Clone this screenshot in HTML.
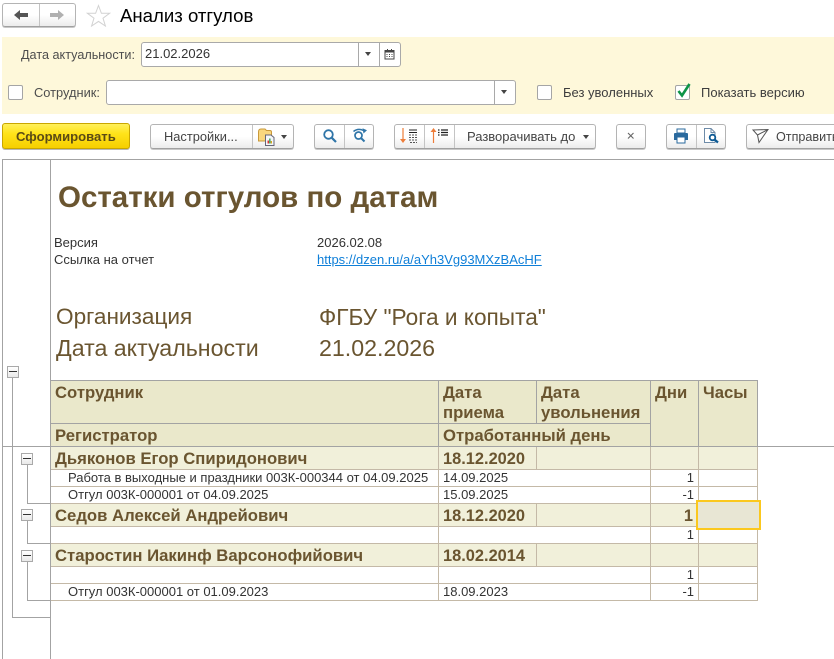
<!DOCTYPE html>
<html lang="ru"><head><meta charset="utf-8"><title>Анализ отгулов</title>
<style>
html,body{margin:0;padding:0;background:#fff}
#p{position:relative;width:834px;height:659px;overflow:hidden;background:#fff;font-family:"Liberation Sans",sans-serif;font-size:13px;color:#333}
#p div,#p svg{position:absolute}
.t{white-space:nowrap;line-height:14px}
.btn{box-sizing:border-box;top:124px;height:25px;border:1px solid #b4b4b4;border-bottom:1px solid #a0a0a0;border-radius:3px;background:linear-gradient(#fff,#fff 50%,#ececec);box-shadow:0 1px 0 #c8c8c8}
.sep{top:125px;width:1px;height:23px;background:#c4c4c4}
.inp{box-sizing:border-box;height:25px;border:1px solid #a9a9a9;border-radius:3px;background:#fff}
.cb{box-sizing:border-box;width:15px;height:15px;border:1px solid #a5a5a5;border-radius:2px;background:#fff}
.g{background:#a3a3a3}
.r{background:#c4b9a7}
.d{white-space:nowrap;font-size:13px;line-height:14px;color:#333}
.b{white-space:nowrap;font-weight:bold;font-size:16.400px;line-height:18px;color:#6a5530}
.n{font-size:16.700px}
.h{white-space:nowrap;font-weight:bold;font-size:16.700px;line-height:20px;color:#6a5530}
.x{box-sizing:border-box;width:12px;height:12px;border:1px solid #a9a9a9;background:linear-gradient(#fff,#e9e9e9)}
.x:after{content:"";position:absolute;left:1px;top:4px;width:8px;height:1px;background:#333}
.tri{width:0;height:0;border-left:3.5px solid transparent;border-right:3.5px solid transparent;border-top:4px solid #444}
</style></head><body><div id="p">

<!-- top nav -->
<div class="btn" style="left:2px;top:3px;width:74px;height:24px"></div>
<div class="sep" style="left:39px;top:4px;height:22px"></div>
<svg style="left:13px;top:8px" width="16" height="14"><path d="M1 7L7 2V5H15V9H7V12Z" fill="#555"/></svg>
<svg style="left:49px;top:8px" width="16" height="14"><path d="M15 7L9 2V5H1V9H9V12Z" fill="#b0b0b0"/></svg>
<svg style="left:86px;top:4px" width="25" height="23"><path d="M12.5 1.5L15.4 9.3H23.6L17 14.2L19.4 22L12.5 17.4L5.6 22L8 14.2L1.4 9.3H9.600Z" fill="#fff" stroke="#d2d2d2"/></svg>
<div class="t" style="left:120px;top:5px;font-size:18.600px;line-height:22px;color:#000">Анализ отгулов</div>

<!-- filter panel -->
<div style="left:2px;top:37px;width:832px;height:77px;background:#fef8da"></div>
<div class="t" style="left:21px;top:48px;font-size:12.650px;color:#4d4d4d">Дата актуальности:</div>
<div class="inp" style="left:141px;top:42px;width:260px"></div>
<div class="t" style="left:145px;top:47px;color:#333">21.02.2026</div>
<div style="left:358px;top:43px;width:1px;height:23px;background:#a9a9a9"></div>
<div style="left:379px;top:43px;width:1px;height:23px;background:#a9a9a9"></div>
<div class="tri" style="left:365px;top:52px"></div>
<svg style="left:384px;top:48px" width="11" height="12"><path d="M1 2.500H10V11H1Z" fill="#fff" stroke="#444"/><path d="M1 2H10V4.500H1ZM3 1h1v2H3ZM7 1h1v2H7Z" fill="#444"/><path d="M2.500 6h1v1h-1zM5 6h1v1H5zM7.500 6h1v1h-1zM2.500 8h1v1h-1zM5 8h1v1H5zM7.500 8h1v1h-1z" fill="#444"/></svg>

<div class="cb" style="left:8px;top:85px"></div>
<div class="t" style="left:34px;top:86px;font-size:12.850px;color:#4d4d4d">Сотрудник:</div>
<div class="inp" style="left:106px;top:80px;width:410px"></div>
<div style="left:494px;top:81px;width:1px;height:23px;background:#a9a9a9"></div>
<div class="tri" style="left:501px;top:90px"></div>
<div class="cb" style="left:537px;top:85px"></div>
<div class="t" style="left:563px;top:86px;color:#3d3d3d">Без уволенных</div>
<div class="cb" style="left:675px;top:85px"></div>
<svg style="left:675px;top:82px" width="17" height="17"><path d="M3.500 9L7 13.500L14.500 2" fill="none" stroke="#0d9447" stroke-width="2.600"/></svg>
<div class="t" style="left:701px;top:86px;color:#3d3d3d">Показать версию</div>

<!-- toolbar -->
<div style="box-sizing:border-box;left:2px;top:123px;width:128px;height:26px;border:1px solid #c9a600;border-radius:3px;background:linear-gradient(#fff05a,#ffe31a 40%,#f6cf00);box-shadow:0 1px 0 #b8b8b8"></div>
<div class="t" style="left:16px;top:130px;font-weight:bold;font-size:13.100px;color:#5b4b15">Сформировать</div>

<div class="btn" style="left:150px;width:144px"></div>
<div class="sep" style="left:252px"></div>
<div class="t" style="left:164px;top:130px;font-size:12.850px;color:#444">Настройки...</div>
<svg style="left:257px;top:127px" width="19" height="20">
<path d="M1.500 5Q1.500 2 4 2H8L9.500 3.500H13Q14.500 3.500 14.500 5V14H1.500Z" fill="#f9d77e" stroke="#c9993a"/>
<path d="M8.500 8H14L17 10.500V18.500H8.500Z" fill="#f4f7fa" stroke="#667"/>
<path d="M10.500 16.500V13.500H12V16.500Z" fill="#d33"/><path d="M12.200 16.500V11.500H13.500V16.500Z" fill="#2a9a4a"/><path d="M13.700 16.500V14H15V16.500Z" fill="#d9a520"/>
</svg>
<div class="tri" style="left:281px;top:135px"></div>

<div class="btn" style="left:314px;width:60px"></div>
<div class="sep" style="left:344px"></div>
<svg style="left:322px;top:128px" width="16" height="16"><circle cx="6.500" cy="6.500" r="4.300" fill="none" stroke="#2f75a8" stroke-width="1.800"/><path d="M9.800 9.800L14 14" stroke="#2f75a8" stroke-width="2.200"/></svg>
<svg style="left:352px;top:127px" width="17" height="17"><circle cx="6.500" cy="8.500" r="3.500" fill="none" stroke="#2f75a8" stroke-width="1.700"/><path d="M9 11L12.500 14.500" stroke="#2f75a8" stroke-width="2"/><path d="M1.500 4.500Q6 .8 11.500 3.500" fill="none" stroke="#2f75a8" stroke-width="1.500"/><path d="M10.500 1.200L15 3.200L11.500 6.500Z" fill="#2f75a8"/></svg>

<div class="btn" style="left:394px;width:202px"></div>
<div class="sep" style="left:424px"></div>
<div class="sep" style="left:454px"></div>
<svg style="left:399px;top:127px" width="20" height="19"><path d="M4 1V13" stroke="#ed7d3a" stroke-width="1.200"/><path d="M1 12H7L4 16Z" fill="#ed7d3a"/><path d="M10 3h8M10 5.500h8" stroke="#222" stroke-width="1.100"/><path d="M10 8h8M10 10.500h8M10 13h8M11 15.500h7" stroke="#555" stroke-width="1" stroke-dasharray="2 1"/></svg>
<svg style="left:429px;top:127px" width="22" height="18"><path d="M4.500 4V16" stroke="#ed7d3a" stroke-width="1.200"/><path d="M1.500 5H7.500L4.500 1Z" fill="#ed7d3a"/><path d="M9 3h1.500M9 5.500h1.500M9 8h1.500" stroke="#222" stroke-width="1.200"/><path d="M12 3h7M12 5.500h7M12 8h7" stroke="#222" stroke-width="1.200"/></svg>
<div class="t" style="left:467px;top:130px;color:#444">Разворачивать до</div>
<div class="tri" style="left:583px;top:135px"></div>

<div class="btn" style="left:616px;width:30px"></div>
<svg style="left:626px;top:131px" width="10" height="10"><path d="M2 2L7.500 7.500M7.500 2L2 7.500" stroke="#666" stroke-width="1.100"/></svg>

<div class="btn" style="left:666px;width:60px"></div>
<div class="sep" style="left:696px"></div>
<svg style="left:673px;top:128px" width="16" height="16"><path d="M4 1H12V5H4Z" fill="#fff" stroke="#2a6a9e"/><path d="M1 6Q1 5 2 5H14Q15 5 15 6V12H1Z" fill="#2a6a9e"/><path d="M4 9H12V15H4Z" fill="#fff" stroke="#2a6a9e"/></svg>
<svg style="left:703px;top:127px" width="18" height="18"><path d="M1.500 1.500H8L12 5.500V15.500H1.500Z" fill="#fff" stroke="#6e8ba8"/><path d="M8 1.500V5.500H12" fill="none" stroke="#6e8ba8"/><circle cx="9.500" cy="10.500" r="2.800" fill="#fff" stroke="#0d5a94" stroke-width="1.800"/><path d="M11.500 12.500L15 15.500" stroke="#0d5a94" stroke-width="2.200"/></svg>

<div class="btn" style="left:746px;width:100px"></div>
<svg style="left:752px;top:128px" width="18" height="16"><path d="M1 2L16 1.500L7 14.500L5.500 7Z" fill="none" stroke="#555" stroke-width="1"/><path d="M5.500 7L16 1.500" stroke="#555" stroke-width="1"/></svg>
<div class="t" style="left:776px;top:130px;font-size:12.600px;color:#444">Отправить</div>

<!-- sheet frame -->
<div class="g" style="left:2px;top:159px;width:832px;height:1px"></div>
<div class="g" style="left:2px;top:159px;width:1px;height:500px"></div>
<div class="g" style="left:50px;top:159px;width:1px;height:500px"></div>

<!-- report head -->
<div class="t" style="left:58px;top:181px;font-weight:bold;font-size:29.500px;line-height:34px;color:#6a5530">Остатки отгулов по датам</div>
<div class="t" style="left:54px;top:236px;color:#333">Версия</div>
<div class="t" style="left:54px;top:253px;color:#333">Ссылка на отчет</div>
<div class="t" style="left:317px;top:236px;color:#333">2026.02.08</div>
<div class="t" style="left:317px;top:253px;color:#0f7fd8;text-decoration:underline">https://dzen.ru/a/aYh3Vg93MXzBAcHF</div>
<div class="t" style="left:56px;top:303px;font-size:22.600px;line-height:28px;color:#6a5530">Организация</div>
<div class="t" style="left:56px;top:334px;font-size:23.200px;line-height:28px;color:#6a5530">Дата актуальности</div>
<div class="t" style="left:319px;top:303px;font-size:22.650px;line-height:28px;color:#6a5530">ФГБУ "Рога и копыта"</div>
<div class="t" style="left:319px;top:334px;font-size:23.200px;line-height:28px;color:#6a5530">21.02.2026</div>

<!-- table fills -->
<div style="left:51px;top:381px;width:706px;height:65px;background:#eae8cb"></div>
<div style="left:51px;top:447px;width:706px;height:22px;background:#f1f0da"></div>
<div style="left:51px;top:504px;width:706px;height:22px;background:#f1f0da"></div>
<div style="left:51px;top:544px;width:706px;height:22px;background:#f1f0da"></div>

<!-- body grid -->
<div class="r" style="left:51px;top:469px;width:707px;height:1px"></div>
<div class="r" style="left:51px;top:486px;width:707px;height:1px"></div>
<div class="r" style="left:51px;top:503px;width:707px;height:1px"></div>
<div class="r" style="left:51px;top:526px;width:707px;height:1px"></div>
<div class="r" style="left:51px;top:543px;width:707px;height:1px"></div>
<div class="r" style="left:51px;top:566px;width:707px;height:1px"></div>
<div class="r" style="left:51px;top:583px;width:707px;height:1px"></div>
<div class="r" style="left:51px;top:600px;width:707px;height:1px"></div>
<div class="r" style="left:438px;top:447px;width:1px;height:153px"></div>
<div class="r" style="left:650px;top:447px;width:1px;height:153px"></div>
<div class="r" style="left:698px;top:447px;width:1px;height:153px"></div>
<div class="r" style="left:757px;top:447px;width:1px;height:154px"></div>
<div class="r" style="left:536px;top:447px;width:1px;height:22px"></div>
<div class="r" style="left:536px;top:504px;width:1px;height:22px"></div>
<div class="r" style="left:536px;top:544px;width:1px;height:22px"></div>

<!-- header grid -->
<div class="g" style="left:51px;top:380px;width:707px;height:1px"></div>
<div class="g" style="left:51px;top:423px;width:600px;height:1px"></div>
<div class="g" style="left:438px;top:380px;width:1px;height:66px"></div>
<div class="g" style="left:536px;top:380px;width:1px;height:43px"></div>
<div class="g" style="left:650px;top:380px;width:1px;height:66px"></div>
<div class="g" style="left:698px;top:380px;width:1px;height:66px"></div>
<div class="g" style="left:757px;top:380px;width:1px;height:66px"></div>
<div class="g" style="left:2px;top:446px;width:832px;height:1px"></div>

<div class="h" style="left:55px;top:383px">Сотрудник</div>
<div class="h" style="left:55px;top:426px">Регистратор</div>
<div class="h" style="left:443px;top:383px">Дата</div>
<div class="h" style="left:443px;top:403px">приема</div>
<div class="h" style="left:541px;top:383px">Дата</div>
<div class="h" style="left:541px;top:403px">увольнения</div>
<div class="h" style="left:443px;top:426px">Отработанный день</div>
<div class="h" style="left:655px;top:383px">Дни</div>
<div class="h" style="left:703px;top:383px">Часы</div>

<!-- rows -->
<div class="b n" style="left:55px;top:450px">Дьяконов Егор Спиридонович</div>
<div class="b" style="left:443px;top:450px">18.12.2020</div>
<div class="d" style="left:68px;top:471px">Работа в выходные и праздники 003К-000344 от 04.09.2025</div>
<div class="d" style="left:443px;top:471px">14.09.2025</div>
<div class="d" style="right:140px;top:471px">1</div>
<div class="d" style="left:68px;top:488px">Отгул 003К-000001 от 04.09.2025</div>
<div class="d" style="left:443px;top:488px">15.09.2025</div>
<div class="d" style="right:140px;top:488px">-1</div>

<div class="b n" style="left:55px;top:507px">Седов Алексей Андрейович</div>
<div class="b" style="left:443px;top:507px">18.12.2020</div>
<div class="b" style="right:141px;top:507px">1</div>
<div class="d" style="right:140px;top:528px">1</div>

<div class="b n" style="left:55px;top:547px">Старостин Иакинф Варсонофийович</div>
<div class="b" style="left:443px;top:547px">18.02.2014</div>
<div class="d" style="right:140px;top:568px">1</div>
<div class="d" style="left:68px;top:585px">Отгул 003К-000001 от 01.09.2023</div>
<div class="d" style="left:443px;top:585px">18.09.2023</div>
<div class="d" style="right:140px;top:585px">-1</div>

<!-- selected cell -->
<div style="box-sizing:border-box;left:696px;top:500px;width:65px;height:30px;border:2px solid #fbc81e;background:#e8e6d4;box-shadow:inset 0 0 0 1px #e8e6d4"></div>

<!-- tree -->
<div class="g" style="left:12px;top:378px;width:1px;height:240px"></div>
<div class="g" style="left:12px;top:617px;width:38px;height:1px"></div>
<div class="g" style="left:27px;top:464px;width:1px;height:39px"></div>
<div class="g" style="left:27px;top:503px;width:24px;height:1px"></div>
<div class="g" style="left:27px;top:521px;width:1px;height:22px"></div>
<div class="g" style="left:27px;top:543px;width:24px;height:1px"></div>
<div class="g" style="left:27px;top:561px;width:1px;height:39px"></div>
<div class="g" style="left:27px;top:600px;width:24px;height:1px"></div>
<div class="x" style="left:7px;top:366px"></div>
<div class="x" style="left:21px;top:453px"></div>
<div class="x" style="left:21px;top:509px"></div>
<div class="x" style="left:21px;top:550px"></div>

</div></body></html>
